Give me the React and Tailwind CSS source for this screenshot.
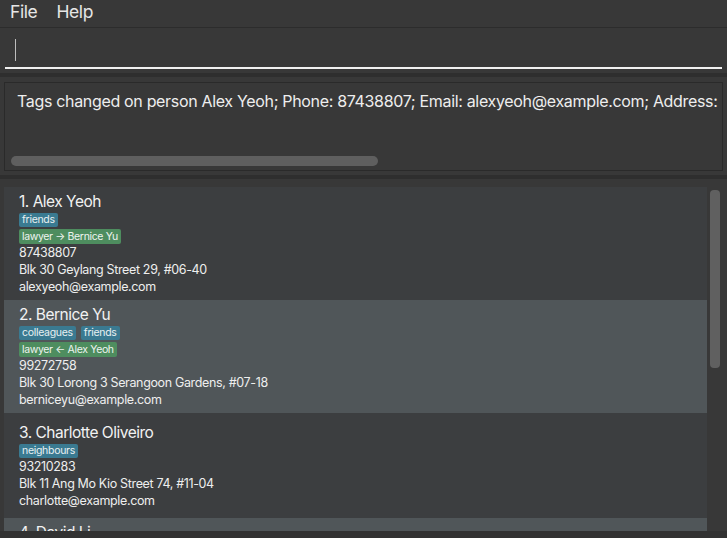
import React from 'react';

const people = [
  {
    name: '1. Alex Yeoh',
    tags: ['friends'],
    links: ['lawyer → Bernice Yu'],
    phone: '87438807',
    address: 'Blk 30 Geylang Street 29, #06-40',
    email: 'alexyeoh@example.com',
  },
  {
    name: '2. Bernice Yu',
    tags: ['colleagues', 'friends'],
    links: ['lawyer ← Alex Yeoh'],
    phone: '99272758',
    address: 'Blk 30 Lorong 3 Serangoon Gardens, #07-18',
    email: 'berniceyu@example.com',
  },
  {
    name: '3. Charlotte Oliveiro',
    tags: ['neighbours'],
    links: [],
    phone: '93210283',
    address: 'Blk 11 Ang Mo Kio Street 74, #11-04',
    email: 'charlotte@example.com',
  },
  {
    name: '4. David Li',
    tags: ['family'],
    links: ['client → Irfan Ibrahim'],
    phone: '91031282',
    address: 'Blk 436 Serangoon Gardens Street 26, #16-43',
    email: 'lidavid@example.com',
  },
];

const PersonCard = ({ person, odd }) => (
  <div
    className={`shrink-0 min-h-[105px] flex flex-col justify-center px-[15px] pt-[5px] pb-[5px] ${
      odd ? 'bg-[#505659]' : 'bg-[#3c3e40]'
    }`}
  >
    <div className="text-[15.5px] leading-[20px] tracking-[-0.5px] text-[#f2f2f2]">{person.name}</div>
    <div className="flex gap-[5px] mt-[1px]">
      {person.tags.map((tag) => (
        <span
          key={tag}
          className="px-[3px] h-[14px] leading-[14px] text-[10.5px] tracking-[-0.3px] rounded-[2px] bg-[#3a7a91] text-[#e8f0f2]"
        >
          {tag}
        </span>
      ))}
    </div>
    {person.links.map((link) => (
      <div key={link} className="flex mt-[2px]">
        <span className="px-[3px] h-[15px] leading-[15px] text-[10.5px] tracking-[-0.35px] rounded-[2px] bg-[#4e8d5f] text-[#eef4ef]">
          {link}
        </span>
      </div>
    ))}
    <div className="text-[12.5px] leading-[17px] tracking-[-0.35px] text-[#eeeeee]">{person.phone}</div>
    <div className="text-[12.5px] leading-[17px] tracking-[-0.35px] text-[#eeeeee]">{person.address}</div>
    <div className="text-[12.5px] leading-[17px] tracking-[-0.35px] text-[#eeeeee]">{person.email}</div>
  </div>
);

const App = () => {
  return (
    <div className="w-[727px] h-[538px] overflow-hidden flex flex-col bg-[#383838] text-white font-['Inter',sans-serif]">
      {/* menu bar */}
      <div className="h-[28px] shrink-0 flex items-center gap-[19px] px-[10px] pb-[2px] bg-[#383838] border-b border-[#2c2c2c] text-[17.5px] tracking-[-0.4px] text-[#e6e6e6]">
        <span>File</span>
        <span>Help</span>
      </div>

      {/* command box */}
      <div className="h-[45px] shrink-0 px-[5px] pt-[10px] bg-[#383838]">
        <div className="h-[31px] border-b-2 border-[#f0f0f0] pl-[10px] flex items-start">
          <div className="w-px h-[22px] mt-[1px] bg-[#bdbdbd]" />
        </div>
      </div>

      <div className="h-[4px] shrink-0 bg-[#2e2e2e]" />

      {/* result display */}
      <div className="shrink-0 px-[4px] pt-[5px] pb-[4px] bg-[#383838]">
        <div className="h-[89px] border border-[#2a2a2a] bg-[#383838] flex flex-col justify-between pt-[6px] pb-[4px] px-[6px] overflow-hidden">
          <div className="pl-[6px] whitespace-nowrap text-[16px] tracking-[-0.33px] text-[#eeeeee]">
            Tags changed on person Alex Yeoh; Phone: 87438807; Email: alexyeoh@example.com; Address:
          </div>
          <div className="w-[367px] h-[10px] rounded-[5px] bg-[#5f5f5f]" />
        </div>
      </div>

      <div className="h-[4px] shrink-0 bg-[#2e2e2e]" />

      {/* person list */}
      <div className="flex-1 min-h-0 flex flex-col bg-[#383838]">
        <div className="flex-1 min-h-0 flex gap-[3px] pl-[4px] pr-[7px] pt-[8px]">
          <div className="flex-1 min-w-0 flex flex-col overflow-hidden">
            {people.map((p, i) => (
              <PersonCard key={p.name} person={p} odd={i % 2 === 1} />
            ))}
          </div>
          <div className="w-[10px] pt-[3px]">
            <div className="h-[178px] rounded-[4px] bg-[#606060]" />
          </div>
        </div>
        <div className="h-[7px] shrink-0 bg-[#323232]" />
      </div>
    </div>
  );
};

export default App;
